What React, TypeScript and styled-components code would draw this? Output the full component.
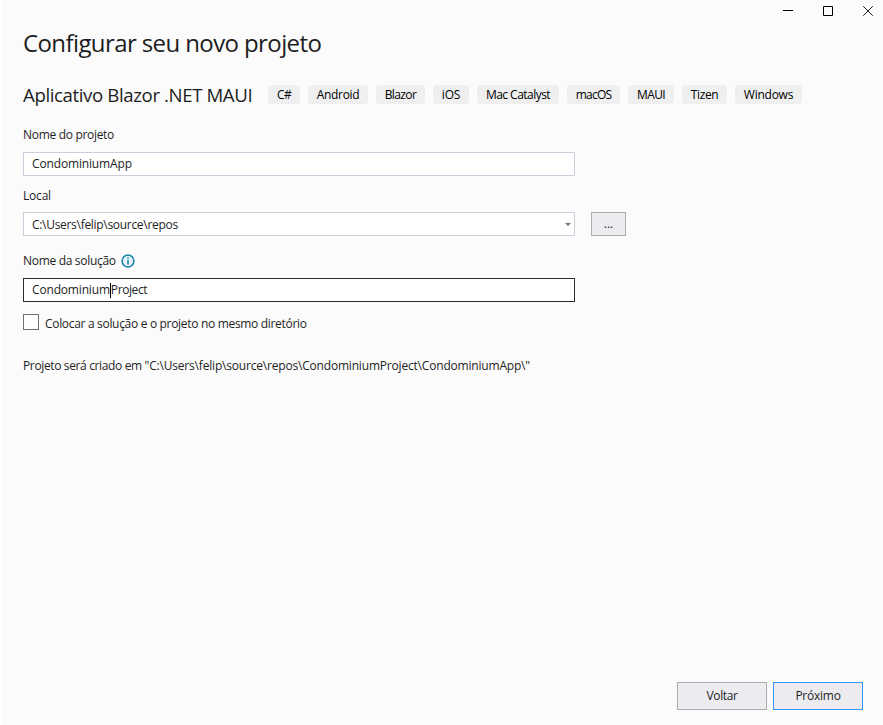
import React from "react";
import styled, { createGlobalStyle } from "styled-components";

const GlobalStyle = createGlobalStyle`
  * { box-sizing: border-box; }
  body { margin: 0; background: #fbfbfb; }
`;

const Dialog = styled.div`
  display: flex;
  flex-direction: column;
  width: 883px;
  height: 725px;
  border-left: 2px solid #ffffff;
  background: #fbfbfb;
  color: #1e1e1e;
  font: 12px/16px "Open Sans", "Noto Sans", sans-serif;
  overflow: hidden;
`;

const Text = styled.span<{ $track?: number }>`
  display: block;
  white-space: pre;
  letter-spacing: ${(p) => p.$track ?? -0.31}px;
`;

const TitleBar = styled.header`
  display: flex;
  justify-content: flex-end;
  height: 22px;
`;

const CaptionButton = styled.button`
  display: flex;
  align-items: center;
  justify-content: center;
  width: 40px;
  height: 22px;
  padding: 0;
  border: 0;
  background: transparent;

  &:last-child {
    width: 35px;
    justify-content: flex-start;
    padding-left: 15px;
  }
`;

const Content = styled.main`
  display: flex;
  flex-direction: column;
  flex: 1;
  align-items: flex-start;
  padding-left: 21px;
`;

const Title = styled.h1`
  margin: 4px 0 0;
  font-size: 24px;
  line-height: 34px;
  font-weight: 400;
  letter-spacing: -0.6px;
  white-space: pre;
`;

const TemplateRow = styled.div`
  display: flex;
  align-items: center;
  height: 26px;
  margin-top: 21px;
`;

const TemplateName = styled.h2`
  width: 245px;
  margin: 0;
  padding-top: 2px;
  font-size: 18.67px;
  line-height: 26px;
  font-weight: 400;
  letter-spacing: -0.4px;
  white-space: pre;
`;

const TagList = styled.div`
  display: flex;
  gap: 8px;
`;

const Tag = styled.div<{ $width: number }>`
  display: flex;
  justify-content: center;
  width: ${(p) => p.$width}px;
  height: 19px;
  padding-top: 2px;
  border-radius: 4px;
  background: #efeff0;
  color: #000000;
`;

const Label = styled.label<{ $top: number }>`
  display: flex;
  align-items: center;
  gap: 5px;
  height: 16px;
  margin-top: ${(p) => p.$top}px;
`;

const FieldRow = styled.div<{ $top: number }>`
  display: flex;
  gap: 16px;
  margin-top: ${(p) => p.$top}px;
`;

const Field = styled.div<{ $focused?: boolean }>`
  display: flex;
  align-items: center;
  width: 552px;
  height: 24px;
  padding: 0 3px 0 8px;
  border: 1px solid ${(p) => (p.$focused ? "#2b2b2e" : "#cccedb")};
  background: #ffffff;
`;

const ComboField = styled(Field)`
  ${Text} {
    padding-top: 2px;
  }
`;

const DropArrow = styled.svg`
  margin-left: auto;
`;

const Caret = styled.span`
  width: 1px;
  height: 15px;
  background: #000000;
`;

const Button = styled.button<{ $primary?: boolean; $small?: boolean }>`
  display: flex;
  align-items: center;
  justify-content: center;
  width: ${(p) => (p.$small ? 35 : 90)}px;
  height: ${(p) => (p.$small ? 24 : 28)}px;
  padding: 0;
  border: 1px solid ${(p) => (p.$primary ? "#3399ff" : "#acacac")};
  background: #ececf0;
  color: #1e1e1e;
  font: inherit;
`;

const CheckRow = styled.label`
  display: flex;
  gap: 6px;
  margin-top: 12px;
`;

const CheckBox = styled.span`
  width: 16px;
  height: 16px;
  border: 1px solid #717171;
  background: #fefefe;
`;

const CheckLabel = styled.span`
  padding-top: 2px;
`;

const Summary = styled.p`
  display: flex;
  margin: 26px 0 0;
`;

const Footer = styled.footer`
  display: flex;
  justify-content: flex-end;
  gap: 6px;
  padding: 0 20px 15px 0;
`;

const tags = [
  { name: "C#", width: 32, track: -0.6 },
  { name: "Android", width: 60, track: -0.3 },
  { name: "Blazor", width: 49, track: -0.6 },
  { name: "iOS", width: 36, track: -0.2 },
  { name: "Mac Catalyst", width: 82, track: -0.53 },
  { name: "macOS", width: 53, track: -0.75 },
  { name: "MAUI", width: 46, track: -0.6 },
  { name: "Tizen", width: 45, track: -0.35 },
  { name: "Windows", width: 67, track: -0.25 },
];

export default function App() {
  return (
    <>
      <GlobalStyle />
      <Dialog>
        <TitleBar>
          <CaptionButton aria-label="Minimizar">
            <svg width="10" height="10" shapeRendering="crispEdges">
              <path d="M0 4h10v1H0z" fill="#000" />
            </svg>
          </CaptionButton>
          <CaptionButton aria-label="Maximizar">
            <svg width="10" height="10">
              <path d="M.5.5h9v9h-9z" fill="none" stroke="#000" />
            </svg>
          </CaptionButton>
          <CaptionButton aria-label="Fechar">
            <svg width="10" height="10">
              <path d="M.2.2l9.6 9.6M9.8.2L.2 9.8" fill="none" stroke="#222" />
            </svg>
          </CaptionButton>
        </TitleBar>
        <Content>
          <Title>Configurar seu novo projeto</Title>
          <TemplateRow>
            <TemplateName>Aplicativo Blazor .NET MAUI</TemplateName>
            <TagList>
              {tags.map((t) => (
                <Tag key={t.name} $width={t.width}>
                  <Text $track={t.track}>{t.name}</Text>
                </Tag>
              ))}
            </TagList>
          </TemplateRow>

          <Label $top={20}>
            <Text>Nome do projeto</Text>
          </Label>
          <FieldRow $top={9}>
            <Field>
              <Text $track={-0.15}>CondominiumApp</Text>
            </Field>
          </FieldRow>

          <Label $top={12}>
            <Text $track={-0.2}>Local</Text>
          </Label>
          <FieldRow $top={8}>
            <ComboField>
              <Text $track={-0.3}>{"C:\\Users\\felip\\source\\repos"}</Text>
              <DropArrow width="6" height="3">
                <path d="M0 0h6L3 3z" fill="#717171" />
              </DropArrow>
            </ComboField>
            <Button $small>
              <Text $track={0}>...</Text>
            </Button>
          </FieldRow>

          <Label $top={17}>
            <Text>Nome da solução</Text>
            <svg width="14" height="14">
              <circle cx="7" cy="7" r="5.9" fill="#e3f2f7" stroke="#1382a8" strokeWidth="1.5" />
              <path d="M6.25 6h1.5v4.5h-1.5zM6.25 3.4h1.5v1.5h-1.5z" fill="#1382a8" />
            </svg>
          </Label>
          <FieldRow $top={9}>
            <Field $focused>
              <Text $track={-0.17}>Condominium</Text>
              <Caret />
              <Text $track={-0.4}>Project</Text>
            </Field>
          </FieldRow>

          <CheckRow>
            <CheckBox />
            <CheckLabel>
              <Text $track={-0.315}>Colocar a solução e o projeto no mesmo diretório</Text>
            </CheckLabel>
          </CheckRow>
          <Summary>
            <Text $track={-0.36}>Projeto será criado em </Text>
            <Text $track={-0.19}>
              {'"C:\\Users\\felip\\source\\repos\\CondominiumProject\\CondominiumApp\\"'}
            </Text>
          </Summary>
        </Content>
        <Footer>
          <Button>
            <Text $track={-0.4}>Voltar</Text>
          </Button>
          <Button $primary>
            <Text $track={-0.25}>Próximo</Text>
          </Button>
        </Footer>
      </Dialog>
    </>
  );
}
